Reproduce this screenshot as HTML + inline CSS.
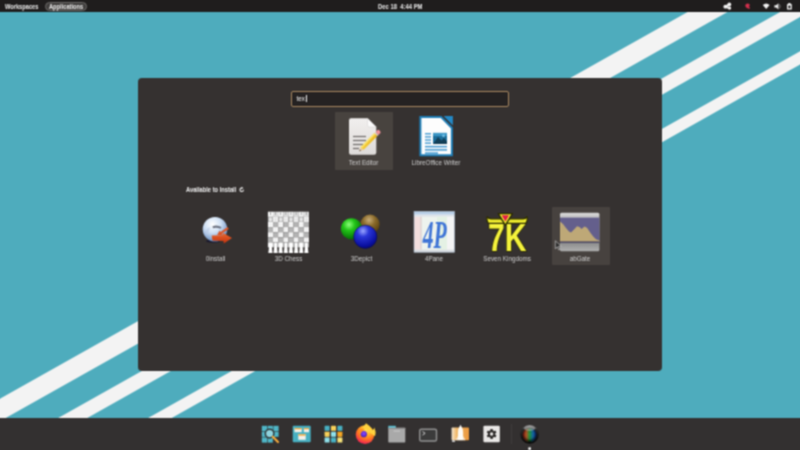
<!DOCTYPE html>
<html lang="en">
<head>
<meta charset="utf-8">
<title>Pop!_OS Applications</title>
<style>
html,body{margin:0;padding:0;}
body{width:800px;height:450px;overflow:hidden;position:relative;background:#4eacbd;font-family:"Liberation Sans",sans-serif;color:#fff;}
#stage{position:absolute;left:-6px;top:-6px;width:812px;height:462px;overflow:hidden;filter:url(#soft);}
#inner{position:absolute;left:6px;top:6px;width:800px;height:450px;}
#wall{position:absolute;left:0;top:0;width:800px;height:450px;}
#topbar{position:absolute;left:0;top:0;width:800px;height:12.3px;}
#topbg{position:absolute;left:-6px;top:-6px;width:812px;height:18.3px;background:#1f1d1d;}
#topbar .t{position:absolute;top:0.9px;height:12px;line-height:12px;font-size:6.5px;font-weight:bold;color:#ededed;white-space:nowrap;transform-origin:0 50%;transform:scaleX(0.875);}
#pill{position:absolute;left:45px;top:1.9px;width:42px;height:9.3px;box-sizing:border-box;border-radius:5px;background:#403e3d;border:0.8px solid #6b6968;}
#dock{position:absolute;left:-6px;top:418.2px;width:812px;height:38px;background:#333030;}
#win{position:absolute;left:137.5px;top:77.5px;width:524.5px;height:293.5px;background:#353130;border-radius:4px;}
#search{position:absolute;left:291.25px;top:90.75px;width:217.5px;height:16.5px;box-sizing:border-box;border:1.3px solid #a98860;border-radius:2px;background:#252222;}
#search span{position:absolute;left:4.2px;top:0.2px;line-height:14px;font-size:6.4px;color:#f0f0f0;}
#search i{position:absolute;left:13.6px;top:3.6px;width:0.9px;height:7px;background:#f4f4f4;}
.tile{position:absolute;width:58px;height:58px;border-radius:1px;}
.tile.sel{background:#48433f;}
.lbl{position:absolute;width:90px;margin-left:-45px;text-align:center;font-size:6.3px;line-height:8px;color:#cfcfcf;white-space:nowrap;}
#avail{position:absolute;left:185.5px;top:185.5px;transform-origin:0 50%;transform:scaleX(0.9);font-size:6.4px;line-height:8px;font-weight:bold;color:#efefef;white-space:nowrap;}
svg{position:absolute;overflow:visible;}
</style>
</head>
<body>
<svg width="0" height="0" style="position:absolute;left:0;top:0;"><defs><filter id="soft" x="0" y="0" width="100%" height="100%" color-interpolation-filters="sRGB"><feConvolveMatrix order="3" kernelMatrix="0.057 0.125 0.057 0.125 0.272 0.125 0.057 0.125 0.057" edgeMode="duplicate" preserveAlpha="true"/></filter></defs></svg>
<div id="stage"><div id="inner">
<svg id="wall" viewBox="0 0 800 450" width="800" height="450">
  <rect x="-6" y="-6" width="812" height="462" fill="#4eacbd"/>
  <polygon points="-16,407.80 816,-60.20 816,-37.80 -16,430.20" fill="#f3f3f3"/>
  <polygon points="-16,459.70 816,-8.30 816,8.10 -16,476.10" fill="#f3f3f3"/>
  <polygon points="-16,510.30 816,42.30 816,55.60 -16,523.60" fill="#f3f3f3"/>
</svg>

<div id="topbg"></div>
<div id="topbar">
  
  <svg id="topicons" viewBox="0 0 800 12" width="800" height="12" style="left:0;top:0;">
    <!-- indicator -->
    <g fill="#f2f2f2">
      <circle cx="729.300" cy="4.500" r="1.900"/><circle cx="725.300" cy="6.700" r="1.900"/><circle cx="729.500" cy="8.100" r="1.700"/>
      <path d="M725.300,6.700 L729.300,4.500 M725.300,6.700 L729.500,8.100" stroke="#f2f2f2" stroke-width="2"/>
    </g>
    <!-- red -->
    <path d="M745.200,5.800 q0.200,-2.200 2.600,-2.300 q2,0.200 2,2 l-1,1 1.400,1.500 q-0.800,1 -2,0.500 q-2.800,-0.500 -3,-2.700z" fill="#d12f4c"/>
    <!-- wifi -->
    <path d="M762.800,5 q3.400,-3 6.800,0 l-3.400,4z" fill="#f2f2f2"/>
    <!-- volume -->
    <path d="M774.400,5.200 h1.800 l2.200,-1.900 v6.200 l-2.200,-1.900 h-1.800z" fill="#f2f2f2"/>
    <path d="M779.300,4.300 q1.800,2.100 0,4.200" fill="none" stroke="#8a8a8a" stroke-width="0.900"/>
    <!-- battery -->
    <rect x="788.300" y="3" width="2.200" height="1.400" fill="#f2f2f2"/>
    <rect x="787" y="4" width="4.800" height="5.600" rx="0.700" fill="#f2f2f2"/>
    <rect x="788.300" y="5.600" width="2.200" height="2.600" fill="#1f1d1d"/>
  </svg>
  <div id="pill"></div>
  <div class="t" style="left:4.6px;">Workspaces</div>
  <div class="t" style="left:48.8px;">Applications</div>
  <div class="t" style="left:377.6px;transform:scaleX(0.905);">Dec 18&nbsp; 4:44 PM</div>
</div>

<div id="win"></div>
<div id="search"><span>tex</span><i></i></div>


<!-- Row 1 -->
<div class="tile sel" style="left:334.5px;top:112px;"></div>
<svg id="ic-text" viewBox="0 0 32 40" width="32" height="40" style="left:347px;top:116px;">
  <defs>
    <linearGradient id="gdoc" x1="0" y1="0" x2="0" y2="1"><stop offset="0" stop-color="#f1efee"/><stop offset="1" stop-color="#dddad8"/></linearGradient>
    <linearGradient id="gpen" x1="0" y1="0" x2="1" y2="1"><stop offset="0" stop-color="#f9d94a"/><stop offset="1" stop-color="#e8b21c"/></linearGradient>
  </defs>
  <path d="M4,2.2 H20.5 L29.3,11 V36.5 Q29.3,38.8 27,38.8 H4 Q2,38.8 2,36.5 V4.4 Q2,2.2 4,2.2 Z" fill="url(#gdoc)"/>
  <path d="M20.5,2.2 L29.3,11 H22.5 Q20.5,11 20.5,9 Z" fill="#fbfbfb" stroke="#c9c6c4" stroke-width="0.4"/>
  <g stroke="#6d6a69" stroke-width="1.2">
    <line x1="6" y1="20.5" x2="19" y2="20.5"/>
    <line x1="6" y1="24.5" x2="19" y2="24.5"/>
    <line x1="6" y1="28.5" x2="16" y2="28.5"/>
    <line x1="6" y1="32.5" x2="12" y2="32.5"/>
  </g>
  <g transform="translate(12.3,35.2) rotate(-45)">
    <polygon points="0,0 4,-2.1 4,2.1" fill="#e8c9a0"/>
    <polygon points="0,0 1.6,-0.85 1.6,0.85" fill="#4a4035"/>
    <rect x="4" y="-2.1" width="19.5" height="4.2" fill="url(#gpen)"/>
    <rect x="4" y="-2.1" width="19.5" height="1.4" fill="#fbe574"/>
    <rect x="23.5" y="-2.1" width="1.6" height="4.2" fill="#d9d2c8"/>
    <path d="M25.1,-2.1 H27.5 Q29,-2.1 29,0 Q29,2.1 27.5,2.1 H25.1 Z" fill="#ef8f97"/>
  </g>
</svg>
<div class="lbl" style="left:363.5px;top:159px;">Text Editor</div>

<svg id="ic-lo" viewBox="0 0 36 44" width="36" height="44" style="left:418px;top:114px;">
  <path d="M2.4,2.9 H23 L33.9,14 V41.3 H2.4 Z" fill="#fdfdfd" stroke="#1f7fb8" stroke-width="2"/>
  <polygon points="25.6,1.9 34.9,1.9 34.9,11.4" fill="#2389c6"/>
  <g transform="translate(0,1.6)"><g fill="#3f97cf">
    <rect x="7" y="17.5" width="6" height="1.4"/>
    <rect x="7" y="20.6" width="6" height="1.4"/>
    <rect x="7" y="23.7" width="6" height="1.4"/>
    <rect x="7" y="26.8" width="6" height="1.4"/>
    <rect x="7" y="30.3" width="22" height="1.5"/>
    <rect x="7" y="33.5" width="22" height="1.5"/>
    <rect x="7" y="36.7" width="13" height="1.5"/>
  </g>
  <rect x="15" y="17.3" width="14" height="11" fill="#1d6f9c"/>
  <polygon points="15,28.3 20,21.5 23.5,25 26,22.5 29,26 29,28.3" fill="#123f57"/>
  <circle cx="25.5" cy="20" r="1.4" fill="#8ed0ef"/>
  <rect x="15" y="17.3" width="14" height="3" fill="#53b3e3" opacity="0.6"/>
</g>
</svg>
<div class="lbl" style="left:436px;top:159px;">LibreOffice Writer</div>

<div id="avail">Available to Install</div>
<svg viewBox="0 0 8 8" width="5.4" height="5.4" style="left:239.3px;top:186.9px;">
  <path d="M6.6,4 A2.6,2.6 0 1 1 4,1.4" fill="none" stroke="#fff" stroke-width="1.5"/>
  <polygon points="3.6,-0.4 6.6,1.6 3.6,3.4" fill="#fff"/>
</svg>


<!-- Row 2 -->
<div class="tile sel" style="left:551.5px;top:207px;height:57.5px;background:#47423f;"></div>

<svg id="ic-0i" viewBox="0 0 800 450" width="800" height="450" style="left:0;top:0;">
  <defs>
    <radialGradient id="gglobe" cx="0.4" cy="0.3" r="0.75"><stop offset="0" stop-color="#ffffff"/><stop offset="0.45" stop-color="#cfe0f4"/><stop offset="0.8" stop-color="#86a5cf"/><stop offset="1" stop-color="#4c6a99"/></radialGradient>
    <linearGradient id="garr" x1="0" y1="0" x2="0" y2="1"><stop offset="0" stop-color="#ec6a30"/><stop offset="1" stop-color="#c2300d"/></linearGradient>
    <radialGradient id="ggreen" cx="0.38" cy="0.3" r="0.8"><stop offset="0" stop-color="#8cff7a"/><stop offset="0.35" stop-color="#22c418"/><stop offset="0.8" stop-color="#0a7a08"/><stop offset="1" stop-color="#064a05"/></radialGradient>
    <radialGradient id="gbrown" cx="0.45" cy="0.28" r="0.8"><stop offset="0" stop-color="#c9ad78"/><stop offset="0.4" stop-color="#8a6a2a"/><stop offset="0.85" stop-color="#5a4210"/><stop offset="1" stop-color="#3a2a08"/></radialGradient>
    <radialGradient id="gblue" cx="0.4" cy="0.25" r="0.85"><stop offset="0" stop-color="#9aa6ff"/><stop offset="0.3" stop-color="#2a36d8"/><stop offset="0.75" stop-color="#0a10a0"/><stop offset="1" stop-color="#050860"/></radialGradient>
    <linearGradient id="gframe" x1="0" y1="0" x2="0" y2="1"><stop offset="0" stop-color="#d9d9d9"/><stop offset="0.15" stop-color="#bdbdbd"/><stop offset="0.8" stop-color="#8f8f8f"/><stop offset="1" stop-color="#b0b0b0"/></linearGradient>
  </defs>
  <ellipse cx="213" cy="241.200" rx="7" ry="1.600" fill="#14142e" opacity="0.800"/>
  <circle cx="215" cy="229.200" r="12.300" fill="url(#gglobe)"/>
  <path d="M212.500,226.300 q4.500,-1.800 9,0.800 l-1,1.700 q-4,-1.800 -7.500,-0.600z" fill="#5a5f6e" opacity="0.850"/>
  <path d="M205,232 q2,-4 5,-5 q-1,4 -2,8 q-2,-1 -3,-3z" fill="#b9cbe6" opacity="0.700"/>
  <path d="M227.600,227 L228.800,228.900 L221.800,233.600 L222.700,235.200 L217.200,235 L219.600,230.500 L220.500,232 Z" fill="#dc5626"/>
  <path d="M211.700,235.600 L223,235.300 L222.400,232.600 L232,237.900 L223.800,243.600 L223.500,241 L212.500,240.500 Z" fill="url(#garr)"/>
  <circle cx="370" cy="224.2" r="9.6" fill="url(#gbrown)"/>
  <circle cx="351.5" cy="228.8" r="10.6" fill="url(#ggreen)"/>
  <circle cx="365.3" cy="236.8" r="11.6" fill="url(#gblue)" stroke="#04064a" stroke-width="0.5"/>

  <!-- 4Pane -->
  <rect x="414" y="211.5" width="40.4" height="40.7" fill="#eef3ee"/>
  <rect x="414" y="211.5" width="40.4" height="3.2" fill="#b9cfe8"/>
  <rect x="414" y="214.7" width="40.4" height="2" fill="#dfe3ea"/>
  <rect x="414" y="216.7" width="6.5" height="33" fill="#f3dedd"/>
  <rect x="420.5" y="216.7" width="1" height="33" fill="#d7c4c4"/>
  <rect x="437" y="216.7" width="10" height="33" fill="#e4f1e4"/>
  <rect x="447" y="216.7" width="7.4" height="33" fill="#f4f4f4"/>
  <rect x="414" y="249.7" width="40.4" height="2.5" fill="#d9dde2"/>
  <rect x="414" y="211.5" width="40.4" height="40.7" fill="none" stroke="#9fb0c4" stroke-width="0.6"/>
  <text x="434.8" y="247.500" text-anchor="middle" font-family="Liberation Serif, serif" font-style="italic" font-weight="bold" font-size="41" fill="#3f74d6" textLength="24" lengthAdjust="spacingAndGlyphs">4P</text>

  <!-- Seven Kingdoms -->
  <text x="507.200" y="250.600" text-anchor="middle" font-family="Liberation Sans, sans-serif" font-weight="bold" font-size="38.400" fill="#f4f23c" stroke="#2a2a00" stroke-width="1.500" paint-order="stroke" textLength="38.500" lengthAdjust="spacingAndGlyphs">7K</text>
  <g stroke="#2a2a00" stroke-width="1.300" stroke-linejoin="round" fill="#f1ee2e">
    <path d="M487.300,216.800 q1.200,2 4,2 h31.600 q2.800,0 4,-2 q1.200,3.800 -1.200,6.600 h-37.200 q-2.400,-2.800 -1.200,-6.600z"/>
    <polygon points="498.300,213.600 512.400,213.600 505.350,225.400"/>
  </g>
  <polygon points="501.600,215.300 509.100,215.300 505.350,221.600" fill="#e31b4a"/>
  <!-- last icon -->
  <rect x="560" y="212.8" width="39.4" height="38.5" rx="1.5" fill="url(#gframe)"/>
  <rect x="560" y="217.6" width="39.4" height="24.4" fill="#645f8c"/>
  <path d="M560,242 V221.5 l3,2.5 3,4 3,3.5 2,1 3,-3 3,-3.2 2.5,0.8 2,2 3,-2.6 2.500,1.200 3,4.500 3,4 3,3 3.400,1.300 V242z" fill="#bea877"/>
  <rect x="560" y="241.4" width="39.400" height="1.600" fill="#4d4a66"/>
  <!-- cursor -->
  <path d="M555.300,240.800 l0,8 2,-1.900 1.400,3 1.200,-0.600 -1.400,-2.900 2.700,-0.200z" fill="#2b2b2b" stroke="#dcdcdc" stroke-width="0.600"/>
</svg>
<svg viewBox="0 0 800 450" width="800" height="450" style="left:0;top:0;"><rect x="267.90" y="211.70" width="5.17" height="5.17" fill="#f6f6f6"/><rect x="273.02" y="211.70" width="5.17" height="5.17" fill="#dedede"/><rect x="278.15" y="211.70" width="5.17" height="5.17" fill="#f6f6f6"/><rect x="283.27" y="211.70" width="5.17" height="5.17" fill="#dedede"/><rect x="288.40" y="211.70" width="5.17" height="5.17" fill="#f6f6f6"/><rect x="293.52" y="211.70" width="5.17" height="5.17" fill="#dedede"/><rect x="298.65" y="211.70" width="5.17" height="5.17" fill="#f6f6f6"/><rect x="303.77" y="211.70" width="5.17" height="5.17" fill="#dedede"/><rect x="267.90" y="216.82" width="5.17" height="5.17" fill="#b2b2b2"/><rect x="273.02" y="216.82" width="5.17" height="5.17" fill="#f3f3f3"/><rect x="278.15" y="216.82" width="5.17" height="5.17" fill="#b2b2b2"/><rect x="283.27" y="216.82" width="5.17" height="5.17" fill="#f3f3f3"/><rect x="288.40" y="216.82" width="5.17" height="5.17" fill="#b2b2b2"/><rect x="293.52" y="216.82" width="5.17" height="5.17" fill="#f3f3f3"/><rect x="298.65" y="216.82" width="5.17" height="5.17" fill="#b2b2b2"/><rect x="303.77" y="216.82" width="5.17" height="5.17" fill="#f3f3f3"/><rect x="267.90" y="221.95" width="5.17" height="5.17" fill="#f3f3f3"/><rect x="273.02" y="221.95" width="5.17" height="5.17" fill="#b2b2b2"/><rect x="278.15" y="221.95" width="5.17" height="5.17" fill="#f3f3f3"/><rect x="283.27" y="221.95" width="5.17" height="5.17" fill="#b2b2b2"/><rect x="288.40" y="221.95" width="5.17" height="5.17" fill="#f3f3f3"/><rect x="293.52" y="221.95" width="5.17" height="5.17" fill="#b2b2b2"/><rect x="298.65" y="221.95" width="5.17" height="5.17" fill="#f3f3f3"/><rect x="303.77" y="221.95" width="5.17" height="5.17" fill="#b2b2b2"/><rect x="267.90" y="227.07" width="5.17" height="5.17" fill="#b2b2b2"/><rect x="273.02" y="227.07" width="5.17" height="5.17" fill="#f3f3f3"/><rect x="278.15" y="227.07" width="5.17" height="5.17" fill="#b2b2b2"/><rect x="283.27" y="227.07" width="5.17" height="5.17" fill="#f3f3f3"/><rect x="288.40" y="227.07" width="5.17" height="5.17" fill="#b2b2b2"/><rect x="293.52" y="227.07" width="5.17" height="5.17" fill="#f3f3f3"/><rect x="298.65" y="227.07" width="5.17" height="5.17" fill="#b2b2b2"/><rect x="303.77" y="227.07" width="5.17" height="5.17" fill="#f3f3f3"/><rect x="267.90" y="232.20" width="5.17" height="5.17" fill="#f3f3f3"/><rect x="273.02" y="232.20" width="5.17" height="5.17" fill="#b2b2b2"/><rect x="278.15" y="232.20" width="5.17" height="5.17" fill="#f3f3f3"/><rect x="283.27" y="232.20" width="5.17" height="5.17" fill="#b2b2b2"/><rect x="288.40" y="232.20" width="5.17" height="5.17" fill="#f3f3f3"/><rect x="293.52" y="232.20" width="5.17" height="5.17" fill="#b2b2b2"/><rect x="298.65" y="232.20" width="5.17" height="5.17" fill="#f3f3f3"/><rect x="303.77" y="232.20" width="5.17" height="5.17" fill="#b2b2b2"/><rect x="267.90" y="237.32" width="5.17" height="5.17" fill="#b2b2b2"/><rect x="273.02" y="237.32" width="5.17" height="5.17" fill="#f3f3f3"/><rect x="278.15" y="237.32" width="5.17" height="5.17" fill="#b2b2b2"/><rect x="283.27" y="237.32" width="5.17" height="5.17" fill="#f3f3f3"/><rect x="288.40" y="237.32" width="5.17" height="5.17" fill="#b2b2b2"/><rect x="293.52" y="237.32" width="5.17" height="5.17" fill="#f3f3f3"/><rect x="298.65" y="237.32" width="5.17" height="5.17" fill="#b2b2b2"/><rect x="303.77" y="237.32" width="5.17" height="5.17" fill="#f3f3f3"/><rect x="267.90" y="242.45" width="5.17" height="5.17" fill="#f3f3f3"/><rect x="273.02" y="242.45" width="5.17" height="5.17" fill="#b2b2b2"/><rect x="278.15" y="242.45" width="5.17" height="5.17" fill="#f3f3f3"/><rect x="283.27" y="242.45" width="5.17" height="5.17" fill="#b2b2b2"/><rect x="288.40" y="242.45" width="5.17" height="5.17" fill="#f3f3f3"/><rect x="293.52" y="242.45" width="5.17" height="5.17" fill="#b2b2b2"/><rect x="298.65" y="242.45" width="5.17" height="5.17" fill="#f3f3f3"/><rect x="303.77" y="242.45" width="5.17" height="5.17" fill="#b2b2b2"/><rect x="267.90" y="247.57" width="5.17" height="5.17" fill="#3a3635"/><rect x="273.02" y="247.57" width="5.17" height="5.17" fill="#3a3635"/><rect x="278.15" y="247.57" width="5.17" height="5.17" fill="#3a3635"/><rect x="283.27" y="247.57" width="5.17" height="5.17" fill="#3a3635"/><rect x="288.40" y="247.57" width="5.17" height="5.17" fill="#3a3635"/><rect x="293.52" y="247.57" width="5.17" height="5.17" fill="#3a3635"/><rect x="298.65" y="247.57" width="5.17" height="5.17" fill="#3a3635"/><rect x="303.77" y="247.57" width="5.17" height="5.17" fill="#3a3635"/><rect x="270.06" y="212.30" width="0.8" height="2.6" fill="#8c8c8c"/><rect x="268.96" y="217.42" width="3" height="4" rx="1.2" fill="#e6e6e6"/><circle cx="270.46" cy="244.05" r="1.5" fill="#ffffff"/><path d="M269.26,244.95 h2.4 l0.9,8.12 h-4.2z" fill="#ffffff"/><rect x="275.19" y="212.30" width="0.8" height="2.6" fill="#8c8c8c"/><rect x="274.09" y="217.42" width="3" height="4" rx="1.2" fill="#e6e6e6"/><circle cx="275.59" cy="244.05" r="1.5" fill="#ffffff"/><path d="M274.39,244.95 h2.4 l0.9,8.12 h-4.2z" fill="#ffffff"/><rect x="280.31" y="212.30" width="0.8" height="2.6" fill="#8c8c8c"/><rect x="279.21" y="217.42" width="3" height="4" rx="1.2" fill="#e6e6e6"/><circle cx="280.71" cy="244.05" r="1.5" fill="#ffffff"/><path d="M279.51,244.95 h2.4 l0.9,8.12 h-4.2z" fill="#ffffff"/><rect x="285.44" y="212.30" width="0.8" height="2.6" fill="#8c8c8c"/><rect x="284.34" y="217.42" width="3" height="4" rx="1.2" fill="#e6e6e6"/><circle cx="285.84" cy="244.05" r="1.5" fill="#ffffff"/><path d="M284.64,244.95 h2.4 l0.9,8.12 h-4.2z" fill="#ffffff"/><rect x="290.56" y="212.30" width="0.8" height="2.6" fill="#8c8c8c"/><rect x="289.46" y="217.42" width="3" height="4" rx="1.2" fill="#e6e6e6"/><circle cx="290.96" cy="244.05" r="1.5" fill="#ffffff"/><path d="M289.76,244.95 h2.4 l0.9,8.12 h-4.2z" fill="#ffffff"/><rect x="295.69" y="212.30" width="0.8" height="2.6" fill="#8c8c8c"/><rect x="294.59" y="217.42" width="3" height="4" rx="1.2" fill="#e6e6e6"/><circle cx="296.09" cy="244.05" r="1.5" fill="#ffffff"/><path d="M294.89,244.95 h2.4 l0.9,8.12 h-4.2z" fill="#ffffff"/><rect x="300.81" y="212.30" width="0.8" height="2.6" fill="#8c8c8c"/><rect x="299.71" y="217.42" width="3" height="4" rx="1.2" fill="#e6e6e6"/><circle cx="301.21" cy="244.05" r="1.5" fill="#ffffff"/><path d="M300.01,244.95 h2.4 l0.9,8.12 h-4.2z" fill="#ffffff"/><rect x="305.94" y="212.30" width="0.8" height="2.6" fill="#8c8c8c"/><rect x="304.84" y="217.42" width="3" height="4" rx="1.2" fill="#e6e6e6"/><circle cx="306.34" cy="244.05" r="1.5" fill="#ffffff"/><path d="M305.14,244.95 h2.4 l0.9,8.12 h-4.2z" fill="#ffffff"/></svg>
<div class="lbl" style="left:215.5px;top:254.500px;">0install</div>
<div class="lbl" style="left:288.500px;top:254.500px;">3D Chess</div>
<div class="lbl" style="left:361.500px;top:254.500px;">3Depict</div>
<div class="lbl" style="left:434px;top:254.500px;">4Pane</div>
<div class="lbl" style="left:507px;top:254.500px;">Seven Kingdoms</div>
<div class="lbl" style="left:580px;top:254.500px;">abGate</div>

<div id="dock"></div>
<svg id="dockicons" viewBox="0 0 800 450" width="800" height="450" style="left:0;top:0;">
  <defs>
    <radialGradient id="gff" cx="0.62" cy="0.2" r="0.95"><stop offset="0" stop-color="#fff36b"/><stop offset="0.25" stop-color="#ffbd2e"/><stop offset="0.55" stop-color="#ff7a1f"/><stop offset="0.8" stop-color="#f5314a"/><stop offset="1" stop-color="#d81a6a"/></radialGradient>
    <radialGradient id="gffc" cx="0.5" cy="0.4" r="0.6"><stop offset="0" stop-color="#8a4bff"/><stop offset="0.7" stop-color="#5a2ad6"/><stop offset="1" stop-color="#3d1fa0"/></radialGradient>
    <linearGradient id="gshop" x1="0" y1="0" x2="1" y2="0"><stop offset="0" stop-color="#f3e6d2"/><stop offset="0.3" stop-color="#f0b766"/><stop offset="1" stop-color="#e9963c"/></linearGradient>
    <linearGradient id="grgb" x1="0" y1="0" x2="1" y2="0"><stop offset="0" stop-color="#d42a1e"/><stop offset="0.28" stop-color="#b8622a"/><stop offset="0.5" stop-color="#1f9a3c"/><stop offset="0.75" stop-color="#1670b8"/><stop offset="1" stop-color="#1540b0"/></linearGradient>
    <radialGradient id="gsphd" cx="0.5" cy="0.45" r="0.5"><stop offset="0" stop-color="#000" stop-opacity="0"/><stop offset="0.6" stop-color="#000" stop-opacity="0.15"/><stop offset="1" stop-color="#000" stop-opacity="0.75"/></radialGradient>
    <linearGradient id="gsph" x1="0" y1="0" x2="0" y2="1"><stop offset="0" stop-color="#9a9a9a"/><stop offset="0.25" stop-color="#2a2a2a"/><stop offset="1" stop-color="#050505"/></linearGradient>
  </defs>
  <!-- launcher -->
  <g fill="#4fb5c6">
    <rect x="261.800" y="425.800" width="5.200" height="5.200"/><rect x="267.600" y="425.800" width="5.200" height="5.200"/><rect x="273.400" y="425.800" width="5.200" height="5.200"/>
    <rect x="261.800" y="431.600" width="5.200" height="5.200"/><rect x="267.600" y="431.600" width="5.200" height="5.200"/><rect x="273.400" y="431.600" width="5.200" height="5.200"/>
    <rect x="261.800" y="437.400" width="5.200" height="5.200"/><rect x="267.600" y="437.400" width="5.200" height="5.200"/>
  </g>
  <circle cx="269.600" cy="433.600" r="4.300" fill="#8fd3de" stroke="#2f3536" stroke-width="1.500"/>
  <line x1="272.800" y1="436.800" x2="278" y2="442" stroke="#f2a93c" stroke-width="2.200" stroke-linecap="round"/>
  <!-- workspaces -->
  <rect x="292.700" y="425.800" width="18" height="16.400" rx="1" fill="#48b0c2"/>
  <rect x="294.500" y="428" width="7.200" height="4.200" fill="#f6f1ea"/><rect x="294.500" y="428" width="7.200" height="1.300" fill="#f2a93c"/>
  <rect x="303.800" y="428" width="5.200" height="4.200" fill="#f6f1ea"/><rect x="303.800" y="428" width="5.200" height="1.300" fill="#f2a93c"/>
  <rect x="298.300" y="434.200" width="7.400" height="5.600" fill="#f6f1ea"/><rect x="298.300" y="434.200" width="7.400" height="1.500" fill="#f2a93c"/>
  <!-- app grid -->
  <g>
    <rect x="324.600" y="425.800" width="5" height="5" rx="0.600" fill="#48b0c2"/><rect x="331" y="425.800" width="5" height="5" rx="0.600" fill="#f6d05a"/><rect x="337.400" y="425.800" width="5" height="5" rx="0.600" fill="#48b0c2"/>
    <rect x="324.600" y="431.700" width="5" height="5" rx="0.600" fill="#f6d05a"/><rect x="331" y="431.700" width="5" height="5" rx="0.600" fill="#8fe0ea"/><rect x="337.400" y="431.700" width="5" height="5" rx="0.600" fill="#f5a623"/>
    <rect x="324.600" y="437.600" width="5" height="5" rx="0.600" fill="#8fe0ea"/><rect x="331" y="437.600" width="5" height="5" rx="0.600" fill="#48b0c2"/><rect x="337.400" y="437.600" width="5" height="5" rx="0.600" fill="#f6e27a"/>
  </g>
  <!-- firefox -->
  <circle cx="365" cy="434.600" r="9.300" fill="url(#gff)"/>
  <path d="M362.500,426.500 q2.500,-1 3.500,-3.300 q4.500,2.500 6.500,7 q2,-1 1.500,-3 q2.500,4 1,9 l-7,-5z" fill="#ffd23e"/>
  <circle cx="363.800" cy="434.200" r="3.100" fill="url(#gffc)"/>
  <path d="M358,431 q3,-3 7,-1.500 q-3,0.500 -3.500,3 q-2,0.500 -3.500,-1.500z" fill="#ff8a1f"/>
  <!-- files -->
  <rect x="388.300" y="425.800" width="7.500" height="3" fill="#5cc3d6"/>
  <rect x="388.300" y="427.800" width="17" height="14.800" rx="0.800" fill="#a9a9a9"/>
  <rect x="388.300" y="427.800" width="17" height="1.200" fill="#8f8f8f"/>
  <rect x="393.500" y="430.500" width="6.500" height="1.200" fill="#c4c4c4"/>
  <!-- terminal -->
  <rect x="419.700" y="429.200" width="16.800" height="11.800" rx="1.600" fill="#3b3b3b" stroke="#929292" stroke-width="1.400"/>
  <path d="M422.500,431.500 l2.600,1.800 -2.600,1.800" fill="none" stroke="#dcdcdc" stroke-width="0.900"/>
  <!-- pop shop -->
  <rect x="451.600" y="427.500" width="17.400" height="12.800" rx="0.800" fill="url(#gshop)"/>
  <path d="M460.500,424.800 q2.600,3.500 2.600,8 v7.500 h-5.200 v-7.500 q0,-4.500 2.600,-8z" fill="#fdfbf6"/>
  <path d="M457.900,436 l-2.400,4.300 h2.400z M463.100,436 l2.400,4.300 h-2.400z" fill="#f7e8d2"/>
  <rect x="452" y="440.300" width="3" height="1.600" fill="#d9d9d9"/>
  <!-- settings -->
  <rect x="483.400" y="425.800" width="16.400" height="16.400" rx="1.200" fill="#e9e7e6"/>
  <g transform="translate(491.600,434)">
    <g fill="#2e2b2a">
      <rect x="-1.200" y="-5" width="2.400" height="10" rx="0.400"/>
      <rect x="-1.200" y="-5" width="2.400" height="10" rx="0.400" transform="rotate(60)"/>
      <rect x="-1.200" y="-5" width="2.400" height="10" rx="0.400" transform="rotate(120)"/>
      <circle r="3.700"/>
    </g>
    <circle r="1.700" fill="#e9e7e6"/>
  </g>
  <!-- separator -->
  <rect x="510.900" y="424" width="0.800" height="20" fill="#444040"/>
  <!-- colour sphere -->
  <circle cx="529.600" cy="434.300" r="9.400" fill="url(#gsph)"/>
  <circle cx="529.600" cy="435" r="7" fill="url(#grgb)"/>
  <circle cx="529.600" cy="435" r="7.200" fill="url(#gsphd)"/>
  <ellipse cx="529.600" cy="428.300" rx="5.500" ry="2.600" fill="#c8c8c8" opacity="0.450"/>
  <rect x="528.300" y="447.200" width="2.600" height="2.800" rx="0.500" fill="#ededed"/>
</svg>

</div></div>
</body>
</html>
